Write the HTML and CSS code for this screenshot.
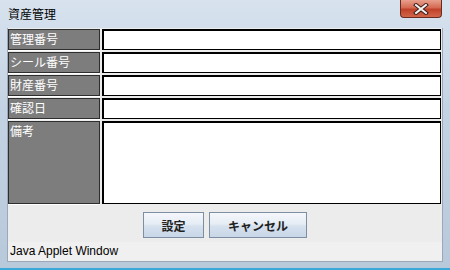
FILE: index.html
```html
<!DOCTYPE html>
<html lang="ja">
<head>
  <meta charset="UTF-8">
  <title>資産管理</title>
  <link rel="stylesheet" href="styles.css">
</head>
<body>
  <div class="window">
    <div class="titlebar">
      <span class="title">資産管理</span>
      <div class="close">
        <svg width="16" height="12" viewBox="0 0 16 12">
          <path d="M3 2 L13 10 M13 2 L3 10" stroke="#3a1a14" stroke-width="4" stroke-linecap="square"/>
          <path d="M3 2 L13 10 M13 2 L3 10" stroke="#f2f2f2" stroke-width="2" stroke-linecap="square"/>
        </svg>
      </div>
    </div>
    <div class="frame">
      <div class="client">
        <form class="fields">
          <label class="name">管理番号</label>
          <input class="value" type="text">
          <label class="name">シール番号</label>
          <input class="value" type="text">
          <label class="name">財産番号</label>
          <input class="value" type="text">
          <label class="name">確認日</label>
          <input class="value" type="text">
          <label class="name">備考</label>
          <textarea class="value"></textarea>
        </form>
        <div class="buttons">
          <button class="btn ok" type="button">設定</button>
          <button class="btn cancel" type="button">キャンセル</button>
        </div>
        <div class="status">Java Applet Window</div>
      </div>
    </div>
  </div>
</body>
</html>
```

FILE: styles.css
```css
body {
  margin: 0;
  background: #fff;
}
.window {
  width: 450px;
  height: 270px;
  display: flex;
  flex-direction: column;
  background: linear-gradient(to bottom, #d7e2ee 0%, #c4d3e3 40%, #b8c9db 100%);
  box-sizing: border-box;
  border-bottom: 2px solid #3aa8d8;
}
.titlebar {
  height: 28px;
  display: flex;
  align-items: center;
  position: relative;
  padding-left: 8px;
}
.title {
  font-family: "Noto Sans CJK JP", sans-serif;
  font-size: 12px;
  color: #000;
  margin-top: -1px;
}
.close {
  position: absolute;
  right: 8px;
  top: 0;
  width: 42px;
  height: 18px;
  box-sizing: border-box;
  border: 1px solid #6b2a20;
  border-top: none;
  border-radius: 0 0 4px 4px;
  background: linear-gradient(to bottom, #e8a08e 0%, #d56a52 45%, #c0412a 55%, #d2664a 100%);
  display: flex;
  align-items: center;
  justify-content: center;
}
.frame {
  flex: 1;
  padding: 0 7px 6px 7px;
  display: flex;
}
.client {
  flex: 1;
  background: #ececec;
  display: flex;
  flex-direction: column;
  border: 1px solid #9aa8b8;
  border-top: none;
}
.fields {
  display: grid;
  grid-template-columns: 92px 339px;
  grid-template-rows: 21px 21px 21px 21px 83px;
  column-gap: 2px;
  row-gap: 2px;
  padding: 1px 0 0 0;
  margin: 0;
}
.name {
  background: #7d7d7d;
  border: 1px solid #2e2e2e;
  box-shadow: 0 1px 0 #fff;
  color: #fff;
  font-family: "Noto Sans CJK JP", sans-serif;
  font-size: 12px;
  line-height: 17px;
  padding-left: 1px;
  box-sizing: border-box;
}
.value {
  background: #fff;
  border: 1px solid #000;
  box-shadow: inset 1px 1px 0 #000;
  margin: 0;
  padding: 0;
  box-sizing: border-box;
  resize: none;
}
.buttons {
  display: flex;
  justify-content: center;
  gap: 5px;
  margin-top: 8px;
  height: 26px;
}
.btn {
  height: 26px;
  box-sizing: border-box;
  border: 1px solid #7d8ea3;
  background: linear-gradient(to bottom, #f4f7fb 0%, #e6edf5 45%, #d6e1ee 55%, #c8d6e7 100%);
  font-family: "Noto Sans CJK JP", sans-serif;
  font-size: 12px;
  font-weight: bold;
  color: #222;
  padding: 0;
}
.ok {
  width: 61px;
}
.cancel {
  width: 98px;
}
.status {
  margin-top: auto;
  height: 19px;
  background: #f0f0f0;
  font-family: "Liberation Sans", sans-serif;
  font-size: 12px;
  color: #000;
  padding-left: 2px;
  line-height: 18px;
}
```
